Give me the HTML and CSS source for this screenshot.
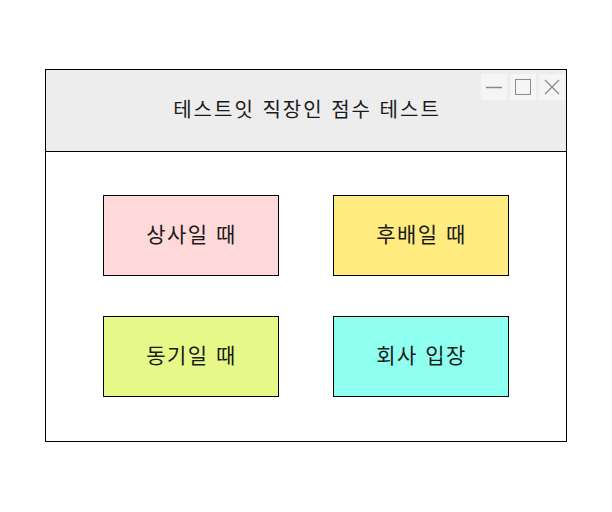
FILE: index.html
```html
<!DOCTYPE html>
<html lang="ko">
<head>
<meta charset="utf-8">
<title>테스트잇 직장인 점수 테스트</title>
<link rel="stylesheet" href="styles.css">
</head>
<body>
<div class="window">
  <div class="titlebar">
    <h1 class="title">테스트잇 직장인 점수 테스트</h1>
    <div class="controls">
      <span class="ctl"><svg width="26" height="26" viewBox="0 0 26 26"><line x1="5" y1="13.5" x2="21" y2="13.5" stroke="#8a8a8a" stroke-width="1.5"/></svg></span>
      <span class="ctl"><svg width="26" height="26" viewBox="0 0 26 26"><rect x="5.5" y="5.5" width="15" height="15" fill="none" stroke="#8a8a8a" stroke-width="1"/></svg></span>
      <span class="ctl"><svg width="26" height="26" viewBox="0 0 26 26"><path d="M6 6 L20 20 M20 6 L6 20" stroke="#8a8a8a" stroke-width="1.3"/></svg></span>
    </div>
  </div>
  <div class="content">
    <div class="grid">
      <button class="opt pink">상사일 때</button>
      <button class="opt yellow">후배일 때</button>
      <button class="opt lime">동기일 때</button>
      <button class="opt cyan">회사 입장</button>
    </div>
  </div>
</div>
</body>
</html>
```
FILE: styles.css
```css
html, body {
  margin: 0;
  padding: 0;
  background: #ffffff;
}
body {
  padding-top: 69px;
  display: flex;
  justify-content: center;
  font-family: "Noto Sans CJK KR", "Noto Sans", sans-serif;
}
.window {
  box-sizing: border-box;
  width: 522px;
  height: 373px;
  border: 1px solid #000;
  display: flex;
  flex-direction: column;
  background: #fff;
}
.titlebar {
  position: relative;
  height: 81px;
  flex: none;
  background: #ededed;
  border-bottom: 1px solid #000;
  display: flex;
  align-items: center;
  justify-content: center;
}
.title {
  margin: 0;
  font-size: 20px;
  font-weight: normal;
  color: #1a1a1a;
  letter-spacing: 2px;
  line-height: 1;
  padding-bottom: 4px;
  padding-left: 2px;
}
.controls {
  position: absolute;
  top: 4px;
  right: 1px;
  display: flex;
  gap: 3px;
}
.ctl {
  width: 26px;
  height: 26px;
  background: #f5f5f5;
  display: block;
}
.ctl svg { display: block; }
.content {
  flex: 1;
  display: flex;
  align-items: center;
  justify-content: center;
}
.grid {
  display: grid;
  grid-template-columns: 176px 176px;
  grid-auto-rows: 81px;
  column-gap: 54px;
  row-gap: 40px;
  margin-bottom: 1px;
}
.opt {
  box-sizing: border-box;
  border: 1px solid #000;
  margin: 0;
  padding: 0 0 4px 1px;
  font-family: "Noto Sans CJK KR", "Noto Sans", sans-serif;
  font-size: 21px;
  letter-spacing: 1.5px;
  line-height: 1;
  color: #1a1a1a;
  display: flex;
  align-items: center;
  justify-content: center;
}
.pink { background: #ffd9d9; }
.yellow { background: #ffeb80; }
.lime { background: #e6f988; }
.cyan { background: #8ffff0; }
```
